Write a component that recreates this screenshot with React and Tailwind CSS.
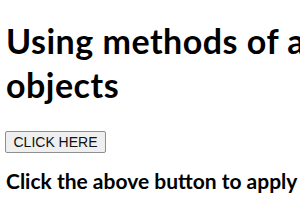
import React from "react";

const App = () => {
  return (
    <div className="w-[300px] h-[210px] overflow-hidden bg-white text-black">
      <div className="w-[440px] pl-[6px]">
        {/* heading runs off the right edge, as in the page */}
        <h1
          className="pt-[19px] text-[34px] leading-[44px] font-bold tracking-[0.5px]"
          style={{ fontFamily: 'Lato, "Open Sans", sans-serif' }}
        >
          Using methods of array
          <br />
          objects
        </h1>

        <div className="mt-[24px] flex">
          <button
            className="h-[22px] w-[101px] -ml-[1px] border border-[#8f8f8f] rounded-[2px] bg-[#efefef] text-[14px] leading-[20px] text-[#111]"
            style={{ fontFamily: '"Liberation Sans", Arial, sans-serif' }}
          >
            CLICK HERE
          </button>
        </div>

        <h3
          className="mt-[14px] text-[21px] leading-[28px] font-bold whitespace-nowrap"
          style={{ fontFamily: 'Lato, "Open Sans", sans-serif' }}
        >
          Click the above button to apply
        </h3>
      </div>
    </div>
  );
};

export default App;
